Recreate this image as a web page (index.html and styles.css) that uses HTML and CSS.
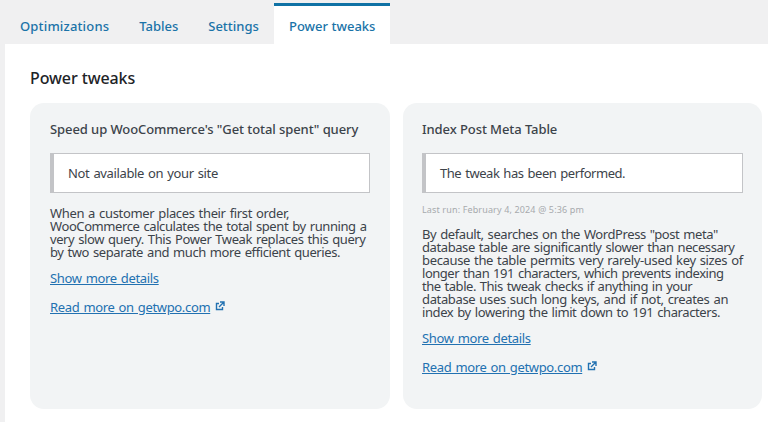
FILE: index.html
```html
<!DOCTYPE html>
<html lang="en">
<head>
<meta charset="utf-8">
<title>Power tweaks</title>
<link rel="stylesheet" href="styles.css">
</head>
<body>
<nav class="tabs">
  <a class="tab wide">Optimizations</a>
  <a class="tab">Tables</a>
  <a class="tab">Settings</a>
  <a class="tab active">Power tweaks</a>
</nav>
<main class="panel">
  <h2>Power tweaks</h2>
  <div class="cards">
    <section class="card">
      <h3>Speed up WooCommerce's "Get total spent" query</h3>
      <div class="notice">Not available on your site</div>
      <p class="desc"><span class="line loose">When a customer places their first order,</span> <span class="line">WooCommerce calculates the total spent by running a</span> <span class="line">very slow query. This Power Tweak replaces this query</span> <span class="line">by two separate and much more efficient queries.</span></p>
      <p class="link"><a>Show more details</a></p>
      <p class="link"><a>Read more on getwpo.com</a><svg class="ext" viewBox="0 0 10 10"><path d="M4 2.5H1.5V8.5H7.5V6M5 1H9V5M9 1L4 6"/></svg></p>
    </section>
    <section class="card second">
      <h3>Index Post Meta Table</h3>
      <div class="notice">The tweak has been performed.</div>
      <p class="last">Last run: February 4, 2024 @ 5:36 pm</p>
      <p class="desc"><span class="line">By default, searches on the WordPress "post meta"</span> <span class="line">database table are significantly slower than necessary</span> <span class="line loose">because the table permits very rarely-used key sizes of</span> <span class="line tight">longer than 191 characters, which prevents indexing</span> <span class="line tight">the table. This tweak checks if anything in your</span> <span class="line loose">database uses such long keys, and if not, creates an</span> <span class="line">index by lowering the limit down to 191 characters.</span></p>
      <p class="link"><a>Show more details</a></p>
      <p class="link"><a>Read more on getwpo.com</a><svg class="ext" viewBox="0 0 10 10"><path d="M4 2.5H1.5V8.5H7.5V6M5 1H9V5M9 1L4 6"/></svg></p>
    </section>
  </div>
</main>
</body>
</html>
```
FILE: styles.css
```css
* { box-sizing: border-box; }
body { margin: 0; height: 422px; overflow: hidden; background: #f0f0f1; color: #3c434a; font: 13px/13px "Noto Sans", sans-serif; }
h2, h3, p { margin: 0; }
.tabs { display: flex; width: 390px; height: 44px; padding: 3px 0 0 5px; }
.tab { padding: 14px 15px 0; border-top: 3px solid transparent; color: #1a73a8; font-weight: 500; line-height: 13px; white-space: nowrap; }
.wide { letter-spacing: .16px; }
.tab.active { width: 116px; margin-left: auto; background: #fff; border-top-color: #0f72a5; }
.panel { height: 378px; margin-left: 5px; padding: 24px 5px 0 25px; background: #fff; }
h2 { height: 35px; font-size: 16px; line-height: 20px; font-weight: 500; letter-spacing: -.1px; color: #1d2327; }
.cards { display: grid; grid-template-columns: 360px 359px; gap: 13px; }
.card { height: 306px; padding: 20px 20px 0; border-radius: 14px; background: #f2f4f5; white-space: nowrap; }
.second { padding: 20px 19px 0; }
h3 { font-size: 13px; line-height: 13px; font-weight: 500; letter-spacing: -.08px; color: #3c434a; }
.notice { height: 40px; margin-top: 17px; padding-left: 14px; border: 1px solid #c3c4c7; border-left-width: 4px; background: #fff; line-height: 38px; letter-spacing: -.36px; word-spacing: 1px; }
.second .notice { letter-spacing: -.45px; }
.desc { margin-top: 14px; letter-spacing: -.41px; word-spacing: 1px; }
.line { display: block; }
.loose { letter-spacing: -.35px; }
.tight { letter-spacing: -.47px; }
.last { margin-top: 11px; height: 12px; font-size: 9px; line-height: 12px; letter-spacing: .14px; color: #a7aaad; }
.last + .desc { margin-top: 12px; }
.link { height: 16px; margin-top: 13px; line-height: 12px; letter-spacing: -.34px; word-spacing: 1px; color: #2271b1; }
.second .link { line-height: 13px; }
.link a { text-decoration: underline; }
.ext { position: relative; top: -1px; width: 10px; height: 10px; margin-left: 5px; fill: none; stroke: #2271b1; stroke-width: 1.4; }
```
